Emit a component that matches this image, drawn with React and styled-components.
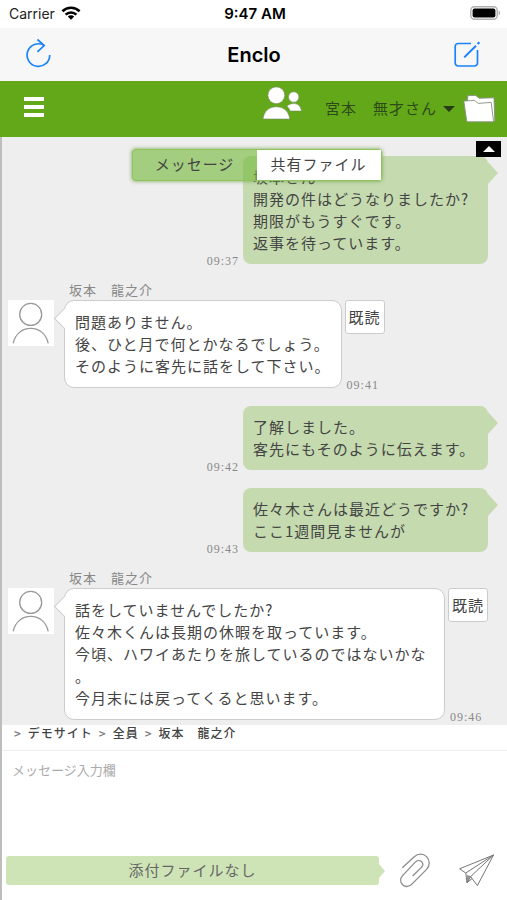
import React, { useState } from 'react';
import styled, { createGlobalStyle, css } from 'styled-components';

const messages = [
    {
        id: 1, mine: true, time: '09:37',
        text: '坂本さん\n開発の件はどうなりましたか?\n期限がもうすぐです。\n返事を待っています。',
    },
    {
        id: 2, mine: false, name: '坂本　龍之介', time: '09:41', read: true,
        text: '問題ありません。\n後、ひと月で何とかなるでしょう。\nそのように客先に話をして下さい。',
    },
    {
        id: 3, mine: true, time: '09:42',
        text: '了解しました。\n客先にもそのように伝えます。',
    },
    {
        id: 4, mine: true, time: '09:43',
        text: '佐々木さんは最近どうですか?\nここ1週間見ませんが',
    },
    {
        id: 5, mine: false, name: '坂本　龍之介', time: '09:46', read: true,
        text: '話をしていませんでしたか?\n佐々木くんは長期の休暇を取っています。\n今頃、ハワイあたりを旅しているのではないかな。\n今月末には戻ってくると思います。',
    },
];

const crumbs = ['デモサイト', '全員', '坂本　龍之介'];

const WifiIcon = () => (
    <svg width="20" height="14" viewBox="0 0 20 14" fill="none" stroke="#000" strokeWidth="2.6">
        <path d="M1.4 5.2a12.4 12.4 0 0 1 17.2 0" />
        <path d="M4.6 8.6a7.8 7.8 0 0 1 10.8 0" />
        <path d="M10 13.8l-3.2-3.2a4.6 4.6 0 0 1 6.4 0z" fill="#000" stroke="none" />
    </svg>
);

const BatteryIcon = () => (
    <svg width="31" height="14" viewBox="0 0 31 14">
        <rect x="0.8" y="0.8" width="26.4" height="12.4" rx="3.6" fill="#fff" stroke="#b0b0b0" strokeWidth="1.4" />
        <rect x="2.6" y="2.4" width="22.8" height="9.2" rx="2" fill="#000" />
        <path d="M28.6 4.6c2 .8 2 4 0 4.8z" fill="#b0b0b0" />
    </svg>
);

const ReloadIcon = () => (
    <svg width="26" height="30" viewBox="0 0 26 30" fill="none" stroke="#1a82fb" strokeWidth="1.7">
        <path d="M23.7 17a11.3 11.3 0 1 1-5.7-9.7" />
        <path d="M11.4 1.5l6.8 6-6.8 6.4" />
    </svg>
);

const ComposeIcon = () => (
    <svg width="30" height="30" viewBox="0 0 30 30" fill="none" stroke="#1a82fb" strokeWidth="1.7">
        <path d="M19 5.5H6.2a3 3 0 0 0-3 3V25a3 3 0 0 0 3 3h16.3a3 3 0 0 0 3-3V12" />
        <path d="M12.2 19.4L24 7.7" strokeWidth="2" />
        <path d="M25.6 6l1.8-1.8" strokeWidth="2.2" />
    </svg>
);

const UsersIcon = () => (
    <svg width="42" height="36" viewBox="0 0 42 36" fill="#fff" stroke="#7d8a70" strokeWidth="0.6">
        <circle cx="14.3" cy="10.3" r="8.4" />
        <path d="M1 34C2 26 7.2 21.8 14.3 21.8S26.6 26 27.8 34z" />
        <circle cx="31.7" cy="12" r="5.2" />
        <path d="M25 21.3c1.6-1.8 4-2.7 6.7-2.7 4.2 0 7 2.5 7.8 7.4H28.2c-.8-1.9-1.8-3.5-3.2-4.7z" />
    </svg>
);

const FolderIcon = () => (
    <svg width="33" height="30" viewBox="0 0 33 30" fill="#fff" stroke="#8a8f84" strokeWidth="0.9" strokeLinejoin="round">
        <path d="M4.4 8L4.8 1.6l7.8-.2 3.600 2.800 14.800-.4L31.800 27l-4 .8z" />
        <path d="M.8 7l10.800-.6 3.600 3 13-1 2.400 19.400H3.800z" />
    </svg>
);

const PersonIcon = () => (
    <svg width="46" height="46" viewBox="0 0 46 46" fill="none" stroke="#999" strokeWidth="1.3">
        <circle cx="22.7" cy="14.4" r="11" />
        <path d="M5.2 43.4C7.2 34 14 28.4 22.7 28.4S38.2 34 40.2 43.4" />
    </svg>
);

const ClipIcon = () => (
    <svg width="38" height="40" viewBox="0 0 38 40" fill="none" stroke="#8c8c8c" strokeWidth="1.3">
        <path d="M6.3 17.7L18.3 6.7C22 3.2 27.4 3.4 30.6 6.6 34 10 34.2 15.6 30.6 19.4L16.4 33.6C13.4 37 9.2 37.4 6.6 34.8 4 32.2 4 28.4 6.8 25.4L19 12.4C21 10.4 23.8 10 25.6 11.8 27.4 13.4 27.2 15.6 25.4 17.4L16.7 26" />
    </svg>
);

const PlaneIcon = () => (
    <svg width="40" height="40" viewBox="0 0 40 40" fill="none" stroke="#777" strokeWidth="1" strokeLinejoin="round">
        <path d="M37.5 5L3.6 18.8l6.2 4.2 1.2 9.6 3.6-6 6.8 9z" />
        <path d="M37.5 5L9.8 23M37.5 5L14.6 26.6M11 32.6l5-4" />
        <path d="M14.6 26.6L11.4 25.4 11 32.6z" fill="#999" strokeWidth="0.6" />
    </svg>
);

const Message = ({ data }) => {
    if (data.mine) {
        return (
            <MyRow>
                <Time>{data.time}</Time>
                <Bubble $mine>{data.text}</Bubble>
            </MyRow>
        );
    }
    return (
        <OtherMessage>
            <Sender>{data.name}</Sender>
            <OtherRow>
                <Avatar><PersonIcon /></Avatar>
                <Bubble>{data.text}</Bubble>
                <Side>
                    {data.read && <ReadBtn type="button">既読</ReadBtn>}
                    <Time $right>{data.time}</Time>
                </Side>
            </OtherRow>
        </OtherMessage>
    );
};

const App = () => {
    const [tab, setTab] = useState('message');
    const [draft, setDraft] = useState('');

    return (
        <>
            <GlobalStyle />
            <Page>
                <StatusBar>
                    <Carrier>Carrier <WifiIcon /></Carrier>
                    <Clock>9:47 AM</Clock>
                    <Battery><BatteryIcon /></Battery>
                </StatusBar>
                <NavBar>
                    <IconBtn type="button" aria-label="更新"><ReloadIcon /></IconBtn>
                    <Title>Enclo</Title>
                    <IconBtn type="button" aria-label="新規作成"><ComposeIcon /></IconBtn>
                </NavBar>
                <Header>
                    <MenuBtn type="button" aria-label="メニュー"><i /><i /><i /></MenuBtn>
                    <MemberBtn type="button" aria-label="メンバー"><UsersIcon /></MemberBtn>
                    <UserSelect aria-label="ユーザー">
                        <option>宮本　無才さん</option>
                    </UserSelect>
                    <Caret />
                    <IconBtn type="button" aria-label="フォルダ"><FolderIcon /></IconBtn>
                </Header>
                <Content>
                    <Chat>
                        <TabArea>
                            <Tabs>
                                <Tab type="button" $active={tab === 'message'} onClick={() => setTab('message')}>メッセージ</Tab>
                                <Tab type="button" $active={tab === 'file'} onClick={() => setTab('file')}>共有ファイル</Tab>
                            </Tabs>
                        </TabArea>
                        <TopBtn type="button" aria-label="上へ"><Caret $up /></TopBtn>
                        {messages.map((m) => <Message key={m.id} data={m} />)}
                    </Chat>
                    <Breadcrumb>
                        {crumbs.map((c) => (
                            <React.Fragment key={c}>
                                <span>&gt;</span>
                                <a href="#">{c}</a>
                            </React.Fragment>
                        ))}
                    </Breadcrumb>
                    <MessageInput
                        aria-label="メッセージ入力欄"
                        placeholder="メッセージ入力欄"
                        value={draft}
                        onChange={(e) => setDraft(e.target.value)}
                    />
                    <Footer>
                        <FileLabel>添付ファイルなし</FileLabel>
                        <IconBtn type="button" aria-label="ファイル添付"><ClipIcon /></IconBtn>
                        <IconBtn type="button" aria-label="送信"><PlaneIcon /></IconBtn>
                    </Footer>
                </Content>
            </Page>
        </>
    );
};

export default App;

const GlobalStyle = createGlobalStyle`
  * {
    box-sizing: border-box;
  }
  body {
    margin: 0;
    background-color: #fff;
    color: #444;
    font-family: "Noto Sans CJK JP", sans-serif;
    font-size: 15px;
    letter-spacing: 1px;
  }
  button, select, textarea {
    font: inherit;
    color: inherit;
    letter-spacing: inherit;
    padding: 0;
    border: 0;
    background: transparent;
  }
  svg {
    display: block;
    flex: none;
  }
`;

const Page = styled.div`
  display: flex;
  flex-direction: column;
  min-height: 100vh;
`;

/* 端末のステータスバー */
const StatusBar = styled.div`
  display: grid;
  grid-template-columns: 1fr auto 1fr;
  align-items: center;
  height: 28px;
  padding: 0 6px 2px 9px;
  font-family: Inter, sans-serif;
  font-size: 14px;
  letter-spacing: normal;
  color: #222;
`;
const Carrier = styled.div`
  display: flex;
  align-items: center;
  gap: 6px;
`;
const Clock = styled.div`
  font-size: 15px;
  font-weight: 600;
  color: #000;
`;
const Battery = styled.div`
  display: flex;
  justify-content: flex-end;
`;

const IconBtn = styled.button`
  flex: none;
  cursor: pointer;
`;
const NavBar = styled.div`
  display: grid;
  grid-template-columns: 1fr auto 1fr;
  align-items: center;
  height: 53px;
  padding: 0 25px 0 26px;
  background-color: #f7f7f8;

  ${IconBtn} {
    justify-self: start;
    padding-bottom: 3px;
  }
  ${IconBtn}:last-child {
    justify-self: end;
  }
`;
const Title = styled.h1`
  margin: 0;
  font-family: Inter, sans-serif;
  font-size: 20px;
  font-weight: 600;
  letter-spacing: normal;
  color: #000;
`;

const Header = styled.header`
  display: flex;
  align-items: center;
  height: 56px;
  padding: 0 11px 0 24px;
  background-color: #62a818;
`;
const MenuBtn = styled.button`
  display: flex;
  flex-direction: column;
  gap: 4px;
  width: 20px;
  margin-right: auto;
  padding-bottom: 4px;
  cursor: pointer;

  i {
    height: 4px;
    background-color: #fff;
  }
`;
const MemberBtn = styled(IconBtn)`
  padding-bottom: 12px;
  margin-right: 21px;
`;
const UserSelect = styled.select`
  appearance: none;
  padding-bottom: 4px;
  color: #2f4a1a;
  cursor: pointer;
`;
const Caret = styled.span`
  width: 0;
  height: 0;
  margin: 0 8px 0 5px;
  border: 6px solid transparent;
  border-bottom: 0;
  border-top-color: #263b16;
  ${props => props.$up && css`
    margin: 0;
    border: 6px solid transparent;
    border-top: 0;
    border-bottom-color: #fff;
  `}
`;

const Content = styled.main`
  display: flex;
  flex-direction: column;
  flex: 1;
  border-left: 2px solid #bdbdbd;
`;
const Chat = styled.section`
  position: relative;
  display: flex;
  flex-direction: column;
  gap: 18px;
  padding: 19px 19px 5px 6px;
  background-color: #eee;
`;
const TabArea = styled.div`
  position: absolute;
  z-index: 1;
  top: 12px;
  left: 4px;
  right: 0;
  display: flex;
  justify-content: center;
`;
const Tabs = styled.div`
  display: grid;
  grid-template-columns: 1fr 1fr;
  width: 250px;
  height: 32px;
  border: 1px solid #8fc45c;
  border-radius: 3px;
  box-shadow: 0 0 4px #7aa352;
`;
const Tab = styled.button`
  padding-bottom: 4px;
  background-color: ${props => props.$active ? 'rgba(113, 184, 53, 0.6)' : '#fff'};
  cursor: pointer;
`;
const TopBtn = styled.button`
  position: absolute;
  z-index: 1;
  top: 4px;
  right: 6px;
  display: flex;
  align-items: center;
  justify-content: center;
  width: 25px;
  height: 16px;
  background-color: #000;
`;

const MyRow = styled.div`
  display: flex;
  justify-content: flex-end;
  align-items: flex-end;
  gap: 4px;
`;
const OtherMessage = styled.div`
  display: flex;
  flex-direction: column;
`;
const Sender = styled.div`
  padding: 0 0 2px 61px;
  font-size: 13px;
  line-height: 16px;
  color: #888;
`;
const OtherRow = styled.div`
  display: flex;
`;
const Avatar = styled.div`
  flex: none;
  width: 46px;
  height: 46px;
  margin-right: 10px;
  background-color: #fff;
`;
const Bubble = styled.div`
  position: relative;
  max-width: 382px;
  padding: 10px;
  border: 1px solid #ccc;
  border-radius: 10px;
  background-color: #fff;
  line-height: 22px;
  white-space: pre-line;
  line-break: anywhere;

  &::before {
    content: "";
    position: absolute;
    top: 10px;
    left: -8px;
    width: 14px;
    height: 14px;
    border: solid #ccc;
    border-width: 0 0 1px 1px;
    background-color: #fff;
    transform: rotate(45deg);
  }

  ${props => props.$mine && css`
    min-width: 245px;
    border: 0;
    border-radius: 8px;
    background-color: #c5dbaf;

    &::before {
      top: 6px;
      left: 100%;
      width: 0;
      height: 0;
      border: 11px solid transparent;
      border-left: 10px solid #c5dbaf;
      border-right: 0;
      background: none;
      transform: none;
    }
  `}
`;
const Side = styled.div`
  display: flex;
  flex-direction: column;
  justify-content: space-between;
  margin-left: 3px;
`;
const ReadBtn = styled.button`
  width: 40px;
  height: 34px;
  padding-bottom: 2px;
  border: 1px solid #ccc;
  border-radius: 3px;
  background-color: #fff;
`;
const Time = styled.time`
  padding-left: ${props => props.$right ? '2px' : '0'};
  font-family: "Liberation Serif", serif;
  font-size: 12px;
  line-height: 6px;
  color: #888;
`;

const Breadcrumb = styled.nav`
  display: flex;
  gap: 6px;
  height: 26px;
  padding-left: 12px;
  border-bottom: 1px solid #eee;
  font-size: 12px;
  font-weight: 500;
  line-height: 16px;

  span {
    color: #777;
  }
  a {
    color: #444;
    text-decoration: none;
  }
`;
const MessageInput = styled.textarea`
  flex: 1;
  min-height: 80px;
  padding: 9px 10px;
  font-size: 13px;
  line-height: 20px;
  letter-spacing: normal;
  resize: none;
  outline: 0;

  &::placeholder {
    color: #aaa;
  }
`;
const Footer = styled.div`
  display: flex;
  align-items: center;
  gap: 22px;
  padding: 0 11px 10px 4px;
`;
const FileLabel = styled.div`
  position: relative;
  flex: 1;
  margin-right: -5px;
  padding-bottom: 1px;
  border-radius: 3px;
  background-color: #cee4b6;
  color: #666;
  line-height: 28px;
  text-align: center;

  &::after {
    content: "";
    position: absolute;
    top: 8px;
    left: 100%;
    border: 7px solid transparent;
    border-left: 6px solid #cee4b6;
    border-right: 0;
  }
`;
